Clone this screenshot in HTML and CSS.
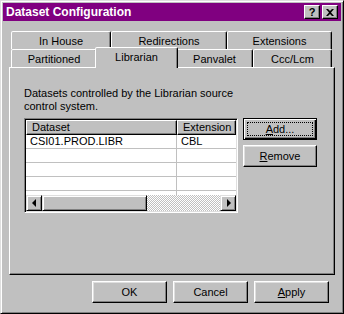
FILE: index.html
```html
<!DOCTYPE html>
<html lang="en">
<head>
    <meta charset="UTF-8">
    <title>Dataset Configuration</title>
    <link rel="stylesheet" href="styles.css">
</head>
<body>
    <div class="window">
        <div class="titlebar">
            <span class="title">Dataset Configuration</span>
            <span class="capbtn">?</span>
            <span class="capbtn close">
                <svg width="8" height="7" viewBox="0 0 8 7"><path d="M0 0h2l2 2 2-2h2L5 3.5 8 7H6L4 5 2 7H0l3-3.5z" fill="#000"/></svg>
            </span>
        </div>

        <div class="body">
            <div class="tabrow back">
                <div class="tab w100">In House</div>
                <div class="tab w116">Redirections</div>
                <div class="tab w105">Extensions</div>
            </div>
            <div class="tabrow front">
                <div class="tab w86">Partitioned</div>
                <div class="tab w79 active">Librarian</div>
                <div class="tab w77">Panvalet</div>
                <div class="tab w79">Ccc/Lcm</div>
            </div>

            <div class="panel">
                <p class="desc">Datasets controlled by the Librarian source<br>control system.</p>
                <div class="content">
                    <div class="list">
                        <div class="lhead">
                            <div class="hcell col1">Dataset</div>
                            <div class="hcell col2">Extension</div>
                        </div>
                        <div class="row">
                            <div class="cell col1">CSI01.PROD.LIBR</div>
                            <div class="cell col2">CBL</div>
                        </div>
                        <div class="row"><div class="cell col1"></div><div class="cell col2"></div></div>
                        <div class="row"><div class="cell col1"></div><div class="cell col2"></div></div>
                        <div class="row"><div class="cell col1"></div><div class="cell col2"></div></div>
                        <div class="row filler"><div class="cell col1"></div><div class="cell col2"></div></div>
                        <div class="hscroll">
                            <div class="sbtn"><span class="tri left"></span></div>
                            <div class="thumb"></div>
                            <div class="track"></div>
                            <div class="sbtn"><span class="tri right"></span></div>
                        </div>
                    </div>
                    <div class="side">
                        <button class="btn side-btn default"><span class="focus"><u>A</u>dd...</span></button>
                        <button class="btn side-btn"><u>R</u>emove</button>
                    </div>
                </div>
            </div>

            <div class="actions">
                <button class="btn">OK</button>
                <button class="btn">Cancel</button>
                <button class="btn"><u>A</u>pply</button>
            </div>
        </div>
    </div>
</body>
</html>
```

FILE: styles.css
```css
body { margin: 0; background: #c0c0c0; font-family: "Liberation Sans", Arial, sans-serif; font-size: 11px; color: #000; }

.window { width: 344px; height: 314px; box-sizing: border-box; background: #c0c0c0; border: 1px solid; border-color: #dfdfdf #000 #000 #dfdfdf; box-shadow: inset 1px 1px #fff, inset -1px -1px #808080; padding: 2px; }

.titlebar { height: 18px; background: #800080; color: #fff; display: flex; align-items: center; padding: 0 3px 0 3px; font-weight: bold; font-size: 12px; }
.title { flex: 1; }
.capbtn { width: 16px; height: 14px; box-sizing: border-box; background: #c0c0c0; color: #000; border: 1px solid; border-color: #fff #000 #000 #fff; box-shadow: inset -1px -1px #808080; display: flex; align-items: center; justify-content: center; font-size: 11px; font-weight: bold; }
.capbtn.close { margin-left: 2px; }

.body { padding: 10px 6px 0 6px; }

.tabrow { display: flex; height: 18px; padding-left: 2px; align-items: flex-start; }
.tab { height: 18px; box-sizing: border-box; border: 1px solid; border-bottom: none; border-color: #fff #000 transparent #fff; border-radius: 2px 2px 0 0; box-shadow: inset -1px 0 #808080; display: flex; align-items: center; justify-content: center; background: #c0c0c0; }
.tab.active { height: 21px; margin: -2px -2px 0 -2px; position: relative; z-index: 1; padding-bottom: 2px; }
.w100 { width: 100px; }
.w116 { width: 116px; }
.w105 { width: 105px; }
.w86 { width: 86px; }
.w79 { width: 79px; }
.tab.active.w79 { width: 83px; }
.w77 { width: 77px; }

.panel { height: 208px; box-sizing: border-box; border: 1px solid; border-color: #fff #000 #000 #fff; box-shadow: inset -1px -1px #808080; padding: 19px 14px 0 14px; }
.desc { margin: 0; line-height: 13px; }

.content { display: flex; gap: 5px; align-items: flex-start; margin-top: 5px; }

.list { width: 214px; height: 95px; box-sizing: border-box; border: 1px solid; border-color: #808080 #fff #fff #808080; box-shadow: inset 1px 1px #000, inset -1px -1px #dfdfdf; padding: 1px; background: #fff; display: flex; flex-direction: column; }
.lhead { display: flex; height: 15px; flex-shrink: 0; }
.hcell { box-sizing: border-box; background: #c0c0c0; border: 1px solid; border-color: #fff #000 #000 #fff; box-shadow: inset -1px -1px #808080; padding-left: 5px; line-height: 12px; }
.col1 { width: 151px; }
.col2 { width: 59px; }
.row { display: flex; height: 14px; flex-shrink: 0; border-bottom: 1px solid #c0c0c0; box-sizing: border-box; }
.row.filler { flex: 1; border-bottom: none; }
.cell { box-sizing: border-box; padding-left: 4px; line-height: 13px; }
.cell.col1 { border-right: 1px solid #c0c0c0; }

.hscroll { display: flex; height: 16px; flex-shrink: 0; }
.sbtn { width: 16px; height: 16px; box-sizing: border-box; background: #c0c0c0; border: 1px solid; border-color: #dfdfdf #000 #000 #dfdfdf; box-shadow: inset 1px 1px #fff, inset -1px -1px #808080; display: flex; align-items: center; justify-content: center; }
.thumb { width: 105px; height: 16px; box-sizing: border-box; background: #c0c0c0; border: 1px solid; border-color: #dfdfdf #000 #000 #dfdfdf; box-shadow: inset 1px 1px #fff, inset -1px -1px #808080; }
.track { flex: 1; background: repeating-conic-gradient(#c0c0c0 0 25%, #fff 0 50%); background-size: 2px 2px; }
.tri { width: 0; height: 0; border-top: 4px solid transparent; border-bottom: 4px solid transparent; }
.tri.left { border-right: 4px solid #000; margin-right: 1px; }
.tri.right { border-left: 4px solid #000; margin-left: 1px; }

.side { display: flex; flex-direction: column; gap: 5px; }

.btn { width: 75px; height: 22px; box-sizing: border-box; background: #c0c0c0; border: 1px solid; border-color: #fff #000 #000 #fff; box-shadow: inset -1px -1px #808080, inset 1px 1px #dfdfdf; font-family: "Liberation Sans", Arial, sans-serif; font-size: 11px; color: #000; padding: 0; }
.side-btn { width: 74px; }
.btn.default { border-color: #000; box-shadow: inset 1px 1px #fff, inset -1px -1px #000, inset -2px -2px #808080; display: flex; padding: 2px 2px 2px 3px; }
.focus { flex: 1; border: 1px dotted #000; display: flex; align-items: center; justify-content: center; margin: 1px 1px 1px 0; }

.actions { display: flex; justify-content: flex-end; gap: 6px; margin-top: 6px; padding-right: 6px; }
```
